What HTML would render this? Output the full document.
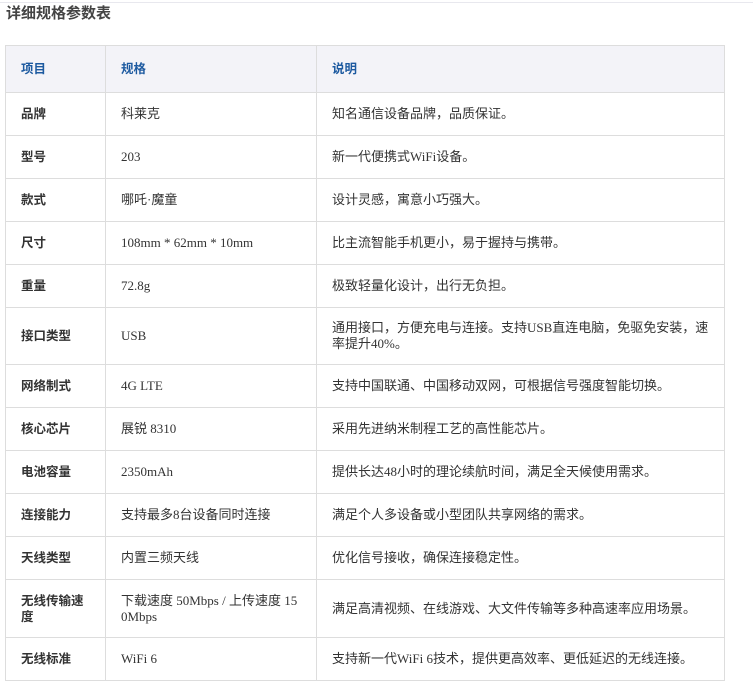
<!DOCTYPE html>
<html><head><meta charset="utf-8"><style>
body{margin:0;background:#fff;font-family:"Liberation Serif","Noto Sans CJK SC",serif;color:#333;}
.top{position:absolute;left:0;top:2px;width:753px;height:1px;background:#e8e8ee}
h2{position:absolute;left:6px;top:4px;margin:0;font:bold 15px/20px "Liberation Sans","Noto Sans CJK SC",sans-serif;color:#444}
table{position:absolute;left:5px;top:45px;border-collapse:collapse;width:719px;table-layout:fixed}
td,th{border:1px solid #ddd;padding:0 14px 0 15px;font-size:13px;line-height:16px;text-align:left;vertical-align:middle}
th{background:#f3f3f8;color:#1d5aa0;font-weight:bold;font-family:"Liberation Sans","Noto Sans CJK SC",sans-serif;height:46px;font-size:12.5px}
td:first-child{font-weight:bold;font-family:"Liberation Sans","Noto Sans CJK SC",sans-serif;color:#333;font-size:12.5px}
tr{height:43px}
</style></head><body>
<div class="top"></div>
<h2>详细规格参数表</h2>
<table>
<colgroup><col style="width:100px"><col style="width:211px"><col style="width:408px"></colgroup>
<tr><th>项目</th><th>规格</th><th>说明</th></tr>
<tr><td>品牌</td><td>科莱克</td><td>知名通信设备品牌，品质保证。</td></tr>
<tr><td>型号</td><td>203</td><td>新一代便携式WiFi设备。</td></tr>
<tr><td>款式</td><td>哪吒·魔童</td><td>设计灵感，寓意小巧强大。</td></tr>
<tr><td>尺寸</td><td>108mm * 62mm * 10mm</td><td>比主流智能手机更小，易于握持与携带。</td></tr>
<tr><td>重量</td><td>72.8g</td><td>极致轻量化设计，出行无负担。</td></tr>
<tr style="height:57px"><td>接口类型</td><td>USB</td><td>通用接口，方便充电与连接。支持USB直连电脑，免驱免安装，速<br>率提升40%。</td></tr>
<tr><td>网络制式</td><td>4G LTE</td><td>支持中国联通、中国移动双网，可根据信号强度智能切换。</td></tr>
<tr><td>核心芯片</td><td>展锐 8310</td><td>采用先进纳米制程工艺的高性能芯片。</td></tr>
<tr><td>电池容量</td><td>2350mAh</td><td>提供长达48小时的理论续航时间，满足全天候使用需求。</td></tr>
<tr><td>连接能力</td><td>支持最多8台设备同时连接</td><td>满足个人多设备或小型团队共享网络的需求。</td></tr>
<tr><td>天线类型</td><td>内置三频天线</td><td>优化信号接收，确保连接稳定性。</td></tr>
<tr style="height:58px"><td>无线传输速度</td><td>下载速度 50Mbps / 上传速度 15<br>0Mbps</td><td>满足高清视频、在线游戏、大文件传输等多种高速率应用场景。</td></tr>
<tr><td>无线标准</td><td>WiFi 6</td><td>支持新一代WiFi 6技术，提供更高效率、更低延迟的无线连接。</td></tr>
</table>
</body></html>
